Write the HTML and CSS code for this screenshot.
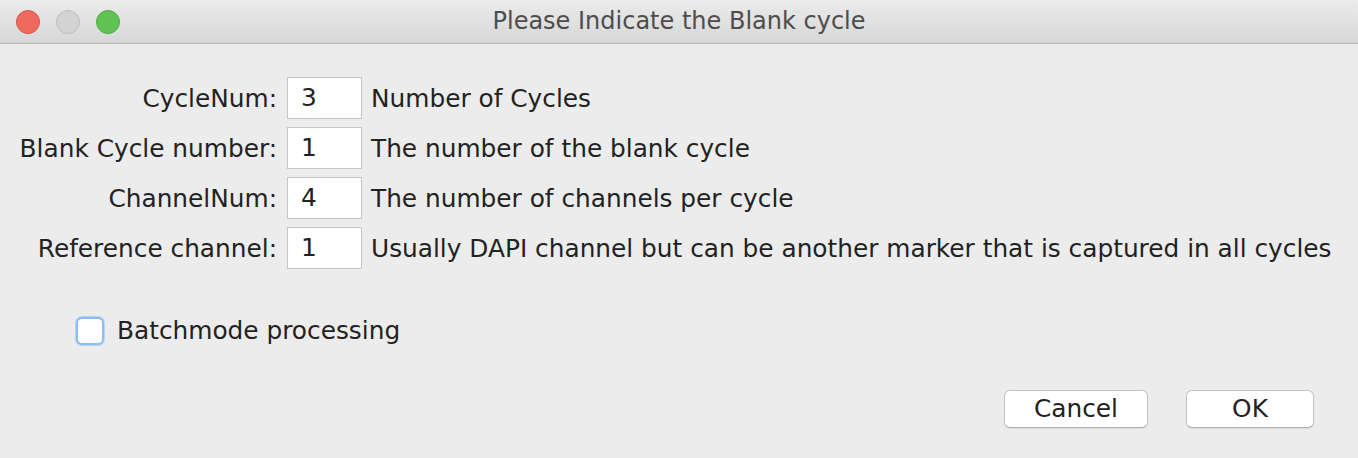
FILE: index.html
```html
<!DOCTYPE html>
<html>
<head>
<meta charset="utf-8">
<link rel="stylesheet" href="styles.css">
</head>
<body>
<div class="window">
  <div class="titlebar">
    <div class="lights">
      <span class="light red"></span>
      <span class="light gray"></span>
      <span class="light green"></span>
    </div>
    <div class="title">Please Indicate the Blank cycle</div>
  </div>
  <div class="content">
    <div class="form">
      <label class="lbl">CycleNum:</label>
      <div class="field">3</div>
      <div class="desc">Number of Cycles</div>

      <label class="lbl">Blank Cycle number:</label>
      <div class="field">1</div>
      <div class="desc">The number of the blank cycle</div>

      <label class="lbl">ChannelNum:</label>
      <div class="field">4</div>
      <div class="desc">The number of channels per cycle</div>

      <label class="lbl">Reference channel:</label>
      <div class="field">1</div>
      <div class="desc">Usually DAPI channel but can be another marker that is captured in all cycles</div>
    </div>
    <div class="check-row">
      <span class="checkbox"></span>
      <span class="check-label">Batchmode processing</span>
    </div>
    <div class="buttons">
      <button class="btn cancel">Cancel</button>
      <button class="btn ok">OK</button>
    </div>
  </div>
</div>
</body>
</html>
```

FILE: styles.css
```css
html, body {
  margin: 0;
  padding: 0;
  background: #ececec;
}
.window {
  width: 1358px;
  height: 458px;
  background: #ececec;
  font-family: "DejaVu Sans", "Liberation Sans", sans-serif;
  color: #222;
  overflow: hidden;
  display: flex;
  flex-direction: column;
}
.titlebar {
  height: 43px;
  flex: none;
  background: linear-gradient(#ebebeb, #d7d7d7);
  border-bottom: 1px solid #b3b3b3;
  border-radius: 8px 8px 0 0;
  display: flex;
  align-items: center;
  position: relative;
}
.lights {
  display: flex;
  gap: 16px;
  padding-left: 16px;
  position: relative;
  z-index: 1;
}
.light {
  width: 24px;
  height: 24px;
  border-radius: 50%;
  box-sizing: border-box;
}
.light.red { background: #ee6a5f; border: 1px solid #d6544a; }
.light.gray { background: #d3d3d3; border: 1px solid #bdbdbd; }
.light.green { background: #5fc454; border: 1px solid #4ea845; }
.title {
  position: absolute;
  left: 0;
  right: 0;
  top: 0;
  line-height: 43px;
  text-align: center;
  font-size: 24px;
  color: #4d4d4d;
}
.content {
  flex: 1;
  display: flex;
  flex-direction: column;
  padding-top: 33px;
}
.form {
  display: grid;
  grid-template-columns: 277px 75px auto;
  column-gap: 10px;
  row-gap: 8px;
  align-items: center;
  font-size: 24.8px;
}
.form .desc { margin-left: -1px; white-space: nowrap; }
.lbl {
  text-align: right;
  white-space: nowrap;
}
.field {
  height: 42px;
  box-sizing: border-box;
  background: #fff;
  border: 1px solid #c6c6c6;
  padding-left: 13px;
  line-height: 40px;
}
.check-row {
  display: flex;
  align-items: center;
  margin-top: 47px;
  padding-left: 76px;
  font-size: 24.8px;
}
.checkbox {
  width: 28px;
  height: 28px;
  box-sizing: border-box;
  background: #fff;
  border: 2px solid #8bbcf3;
  border-radius: 6px;
  box-shadow: 0 0 0 1px #b7d5f7;
  margin-right: 13px;
}
.buttons {
  display: flex;
  justify-content: flex-end;
  gap: 38px;
  padding-right: 44px;
  margin-top: 45px;
}
.btn {
  height: 38px;
  box-sizing: border-box;
  background: #fff;
  border: 1px solid #c3c3c3;
  border-bottom-color: #b0b0b0;
  border-radius: 6px;
  font-family: "DejaVu Sans", "Liberation Sans", sans-serif;
  font-size: 24.8px;
  line-height: 36px;
  color: #222;
  padding: 0;
  box-shadow: 0 1px 1px rgba(0,0,0,0.08);
}
.btn.cancel { width: 144px; }
.btn.ok { width: 128px; }
```
